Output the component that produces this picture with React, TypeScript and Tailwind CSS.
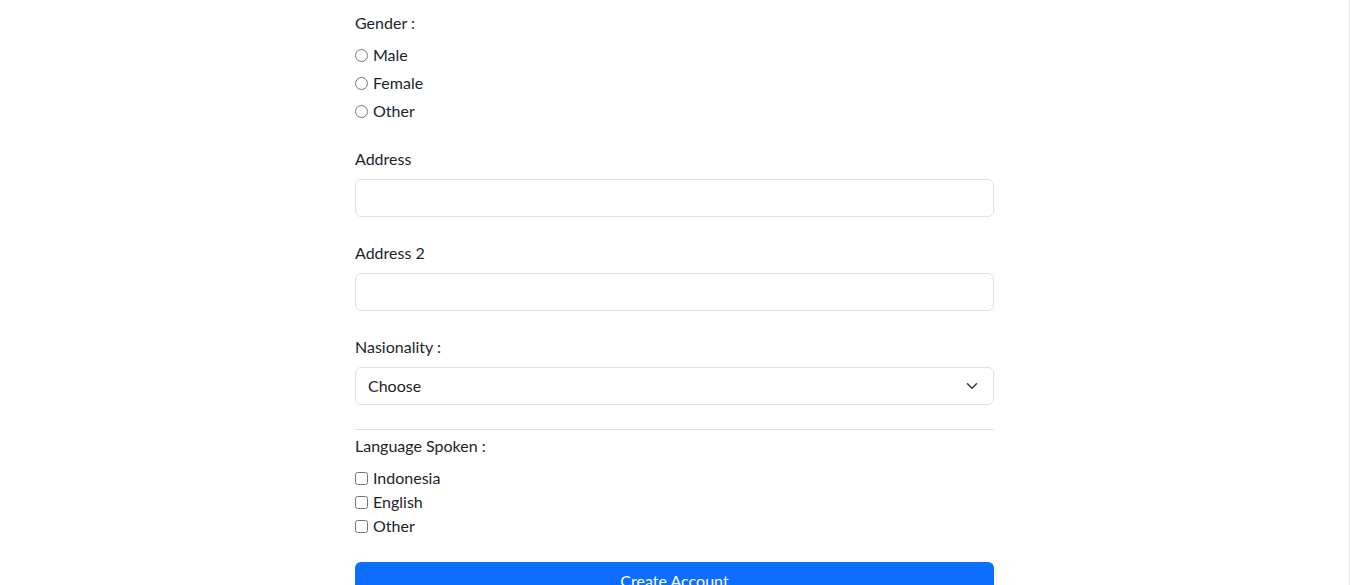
import React from 'react';

const genders = ['Male', 'Female', 'Other'];
const languages = ['Indonesia', 'English', 'Other'];

const App: React.FC = () => {
  return (
    <div className="min-h-[585px] bg-white border-r border-[#e5e5e5] text-[#212529] text-[16px] leading-6 font-['Lato','Segoe_UI',sans-serif]">
      <form className="w-[639px] mx-auto pt-[11px] pb-10">
        <div>Gender :</div>
        <div className="mt-2 flex flex-col gap-1">
          {genders.map((g) => (
            <label key={g} className="flex items-center h-6 gap-[5px]">
              <input type="radio" name="gender" className="m-0 w-[13px] h-[13px]" />
              <span>{g}</span>
            </label>
          ))}
        </div>

        <div className="mt-6">Address</div>
        <input type="text" className="mt-2 block w-full h-[38px] rounded-[6px] border border-[#dee2e6] px-3 outline-none" />

        <div className="mt-6">Address 2</div>
        <input type="text" className="mt-2 block w-full h-[38px] rounded-[6px] border border-[#dee2e6] px-3 outline-none" />

        <div className="mt-6">Nasionality :</div>
        <div className="mt-2 flex items-center justify-between w-full h-[38px] rounded-[6px] border border-[#dee2e6] pl-3 pr-[15px]">
          <span>Choose</span>
          <svg width="12" height="12" viewBox="0 0 16 16" fill="none">
            <path d="M2 5l6 6 6-6" stroke="#343a40" strokeWidth="2" strokeLinecap="round" strokeLinejoin="round" />
          </svg>
        </div>

        <hr className="mt-6 border-t border-[#dee2e6]" />

        <div className="mt-1">Language Spoken :</div>
        <div className="mt-2 flex flex-col">
          {languages.map((l) => (
            <label key={l} className="flex items-center h-6 gap-[5px]">
              <input type="checkbox" className="m-0 w-[13px] h-[13px]" />
              <span>{l}</span>
            </label>
          ))}
        </div>

        <button type="button" className="mt-6 w-full h-[38px] rounded-[6px] bg-[#0d6efd] text-white">
          Create Account
        </button>
      </form>
    </div>
  );
};

export default App;
